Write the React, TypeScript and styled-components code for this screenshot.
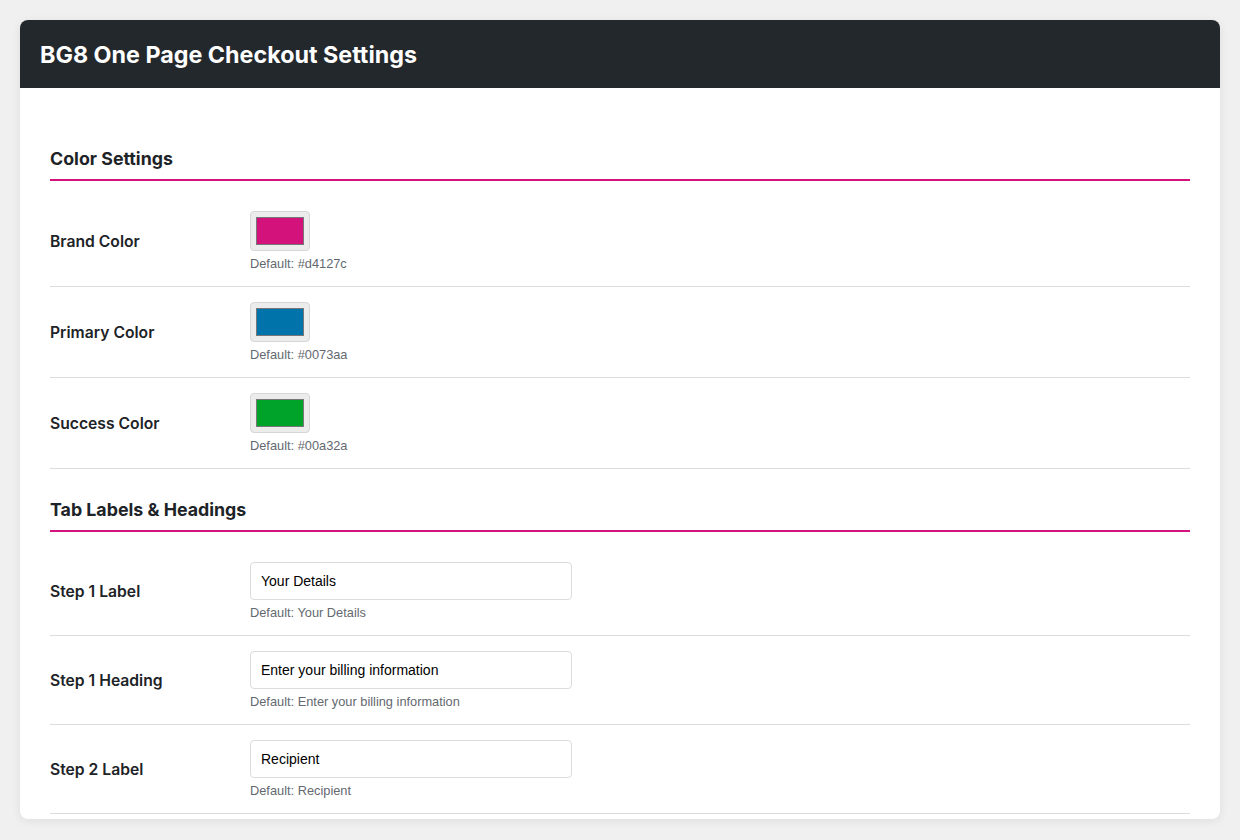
import React, { useState } from 'react';
import styled, { createGlobalStyle } from 'styled-components';

interface ColorSetting {
  id: string;
  label: string;
  value: string;
}

interface TextSetting {
  id: string;
  label: string;
  value: string;
}

const GlobalStyle = createGlobalStyle`
  html, body {
    margin: 0;
    padding: 0;
    background: #f0f0f1;
    height: 100%;
  }
  body {
    font-family: Inter, "Noto Sans", "Liberation Sans", sans-serif;
    color: #1d2327;
  }
  * {
    box-sizing: border-box;
  }
`;

// --- 페이지 레이아웃 ---
const Page = styled.div`
  padding: 20px;
  height: 840px;
`;

const Card = styled.div`
  background: #fff;
  border-radius: 8px;
  box-shadow: 0 2px 10px rgba(0, 0, 0, 0.08);
  height: 799px;
  overflow: hidden;
  display: flex;
  flex-direction: column;
`;

const Header = styled.header`
  background: #23282d;
  height: 68px;
  padding: 0 20px;
  display: flex;
  align-items: center;
  flex-shrink: 0;
`;

const Title = styled.h1`
  margin: 0;
  color: #fff;
  font-size: 23.3px;
  font-weight: 700;
`;

const Body = styled.div`
  padding: 30px 30px 0;
`;

// --- 섹션 ---
const SectionTitle = styled.h2`
  margin: 30px 0 15px;
  padding-bottom: 9px;
  font-size: 17.8px;
  line-height: 22px;
  font-weight: 700;
  color: #1d2327;
  border-bottom: 2px solid #d4127c;
`;

const Row = styled.div`
  display: flex;
  align-items: center;
  padding: 15px 0;
  border-bottom: 1px solid #dcdcde;
`;

const Label = styled.label`
  width: 200px;
  flex-shrink: 0;
  font-size: 15.7px;
  font-weight: 600;
  color: #1d2327;
`;

const Field = styled.div`
  display: flex;
  flex-direction: column;
  align-items: flex-start;
`;

const Swatch = styled.div`
  width: 60px;
  height: 40px;
  padding: 5px;
  background: #ececec;
  border: 1px solid #d6d6d6;
  border-radius: 4px;
`;

const SwatchColor = styled.div<{ $color: string }>`
  width: 100%;
  height: 100%;
  background: ${(p) => p.$color};
  border: 1px solid #777;
`;

const TextInput = styled.input`
  width: 322px;
  height: 38px;
  padding: 0 10px;
  border: 1px solid #dcdcde;
  border-radius: 4px;
  font-family: "Liberation Sans", Arial, sans-serif;
  font-size: 14px;
  color: #000;
  background: #fff;
  outline: none;
`;

const Hint = styled.p`
  margin: 6px 0 0;
  font-family: "Liberation Sans", Arial, sans-serif;
  font-size: 12.8px;
  line-height: 14px;
  color: #646970;
`;

const colorSettings: ColorSetting[] = [
  { id: 'brand', label: 'Brand Color', value: '#d4127c' },
  { id: 'primary', label: 'Primary Color', value: '#0073aa' },
  { id: 'success', label: 'Success Color', value: '#00a32a' },
];

const textSettings: TextSetting[] = [
  { id: 'step1_label', label: 'Step 1 Label', value: 'Your Details' },
  { id: 'step1_heading', label: 'Step 1 Heading', value: 'Enter your billing information' },
  { id: 'step2_label', label: 'Step 2 Label', value: 'Recipient' },
];

const App: React.FC = () => {
  const [texts, setTexts] = useState<Record<string, string>>(
    Object.fromEntries(textSettings.map((t) => [t.id, t.value]))
  );

  const handleChange = (id: string) => (e: React.ChangeEvent<HTMLInputElement>) => {
    setTexts({ ...texts, [id]: e.target.value });
  };

  return (
    <>
      <GlobalStyle />
      <Page>
        <Card>
          <Header>
            <Title>BG8 One Page Checkout Settings</Title>
          </Header>
          <Body>
            <SectionTitle>Color Settings</SectionTitle>
            {colorSettings.map((c) => (
              <Row key={c.id}>
                <Label>{c.label}</Label>
                <Field>
                  <Swatch>
                    <SwatchColor $color={c.value} />
                  </Swatch>
                  <Hint>Default: {c.value}</Hint>
                </Field>
              </Row>
            ))}

            <SectionTitle>Tab Labels &amp; Headings</SectionTitle>
            {textSettings.map((t) => (
              <Row key={t.id}>
                <Label htmlFor={t.id}>{t.label}</Label>
                <Field>
                  <TextInput id={t.id} type="text" value={texts[t.id]} onChange={handleChange(t.id)} />
                  <Hint>Default: {t.value}</Hint>
                </Field>
              </Row>
            ))}
          </Body>
        </Card>
      </Page>
    </>
  );
};

export default App;
